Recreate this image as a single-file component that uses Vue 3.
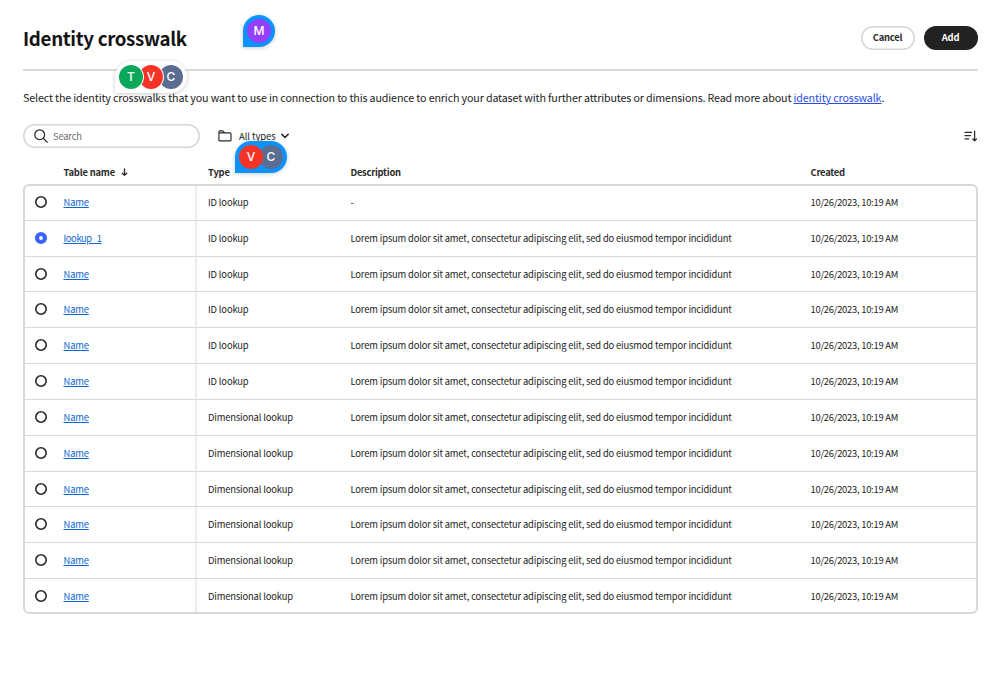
<script setup>
const lorem = 'Lorem ipsum dolor sit amet, consectetur adipiscing elit, sed do eiusmod tempor incididunt'
const rows = Array.from({ length: 12 }, (_, i) => ({
  id: i,
  name: i === 1 ? 'lookup_1' : 'Name',
  selected: i === 1,
  type: i < 6 ? 'ID lookup' : 'Dimensional lookup',
  description: i === 0 ? '-' : lorem,
  created: '10/26/2023, 10:19 AM'
}))
</script>

<template>
  <main class="page">
    <header class="header">
      <h1 class="title">Identity crosswalk</h1>
      <div class="actions">
        <button class="btn cancel">Cancel</button>
        <button class="btn add">Add</button>
      </div>
    </header>

    <p class="intro">Select the identity crosswalks that you want to use in connection to this audience to enrich your dataset with further attributes or dimensions. Read more about <a class="more">identity crosswalk</a>.</p>

    <div class="toolbar">
      <label class="search">
        <svg width="16" height="16" viewBox="0 0 16 16" fill="none" stroke="#292929" stroke-width="1.25" stroke-linecap="round">
          <circle cx="6.7" cy="6.7" r="4.9" />
          <path d="M10.3 10.3L14.2 14.2" />
        </svg>
        <span class="placeholder">Search</span>
      </label>
      <div class="filter">
        <svg width="14" height="12" viewBox="0 0 14 12" fill="none" stroke="#292929" stroke-width="1.15" stroke-linejoin="round">
          <path d="M.9 9.9V1.9Q.9.8 2 .8H4.4Q4.9.8 5.2 1.2L6.5 2.8H12Q13 2.8 13 3.8V9.9Q13 10.9 12 10.9H1.9Q.9 10.9.9 9.9ZM.9 2.8H6.5" />
        </svg>
        <span class="filter-text">All types</span>
        <svg class="chevron" width="8" height="6" viewBox="0 0 8 6" fill="none" stroke="#292929" stroke-width="1.5" stroke-linecap="round" stroke-linejoin="round">
          <path d="M.9 1.4L4 4.5L7.1 1.4" />
        </svg>
      </div>
      <svg class="sort" width="14" height="12" viewBox="0 0 14 12" fill="none" stroke="#292929" stroke-width="1.25" stroke-linecap="round" stroke-linejoin="round">
        <path d="M1 2.4H7.6M1 5.6H6.4M1 8.8H4.8M10.6 1.2V10.6M8.8 9L10.6 10.8L12.4 9" />
      </svg>
    </div>

    <div class="grid head">
      <span></span>
      <span class="name-head">Table name
        <svg width="7" height="9" viewBox="0 0 7 9" fill="none" stroke="#292929" stroke-width="1.3" stroke-linecap="round" stroke-linejoin="round">
          <path d="M3.5 1V7.3M1.3 5.2L3.5 7.4L5.7 5.2" />
        </svg>
      </span>
      <span class="type-head">Type</span>
      <span class="desc-head">Description</span>
      <span class="desc-head">Created</span>
    </div>

    <section class="table">
      <div v-for="row in rows" :key="row.id" class="grid row">
        <svg class="radio" width="14" height="14" viewBox="0 0 14 14" fill="#fff">
          <circle v-if="row.selected" cx="7" cy="7" r="4" stroke="#3b63fb" stroke-width="4.2" />
          <circle v-else cx="7" cy="7" r="5.2" stroke="#292929" stroke-width="1.6" />
        </svg>
        <span class="text"><a class="link" :class="{ lookup: row.selected }">{{ row.name }}</a></span>
        <span class="type"><span class="text">{{ row.type }}</span></span>
        <span class="text">{{ row.description }}</span>
        <span class="text date">{{ row.created }}</span>
      </div>
    </section>

    <div class="pin solid pin-m"><i class="av purple">M</i></div>
    <div class="pin plain pin-tvc"><i class="av green">T</i><i class="av red">V</i><i class="av slate">C</i></div>
    <div class="pin solid pin-vc"><i class="av red">V</i><i class="av slate">C</i></div>
  </main>
</template>

<style>
body { background: #fff; overflow: hidden; }
</style>

<style scoped>
.page {
  position: relative;
  box-sizing: border-box;
  width: 1004px;
  height: 691px;
  padding: 0 26px 0 23px;
  background: #fff;
  color: #222;
  font-family: "Noto Sans CJK SC", "Noto Sans", sans-serif;
  font-size: 9.4px;
  line-height: 16px;
  letter-spacing: -.153px;
  white-space: nowrap;
}
.header {
  display: flex;
  justify-content: space-between;
  box-sizing: border-box;
  height: 71px;
  border-bottom: 2px solid #dadada;
}
.title {
  margin: 24px 0 0;
  font-size: 18.7px;
  font-weight: 700;
  line-height: 28px;
  letter-spacing: -.31px;
  color: #131313;
}
.actions { display: flex; gap: 9px; margin-top: 26px; }
.btn {
  box-sizing: border-box;
  height: 24px;
  padding: 0 1px 2px 0;
  border: 0;
  border-radius: 12px;
  font: 700 9.4px/16px "Noto Sans CJK SC", "Noto Sans", sans-serif;
  letter-spacing: -.2px;
}
.cancel { width: 54px; box-shadow: inset 0 0 0 1.5px #d5d5d5; background: #fff; color: #292929; }
.add { width: 54px; background: #222; color: #fff; }
.intro { margin: 19px 0 0; font-size: 10.7px; line-height: 16px; letter-spacing: -.14px; }
.more { color: #274dea; text-decoration: underline; text-underline-offset: 1px; text-decoration-thickness: 1px; }
.toolbar { display: flex; align-items: center; height: 24px; margin-top: 18px; }
.search {
  display: flex;
  align-items: center;
  box-sizing: border-box;
  width: 177px;
  height: 24px;
  padding-left: 10px;
  box-shadow: inset 0 0 0 1.5px #d5d5d5;
  border-radius: 12px;
}
.placeholder { margin-left: 4px; color: #6d6d6d; letter-spacing: -.2px; }
.filter { display: flex; align-items: center; margin-left: 18px; }
.filter-text { margin-left: 7px; letter-spacing: -.04px; }
.chevron { margin-left: 5.5px; }
.sort { margin-left: auto; }
.grid {
  display: grid;
  grid-template-columns: 40.5px 131.5px 155.5px 460px 1fr;
  align-items: center;
}
.head { height: 24px; margin-top: 12px; font-weight: 700; color: #292929; letter-spacing: -.18px; }
.name-head { display: flex; align-items: center; gap: 6px; }
.type-head { padding-left: 13px; }
.desc-head { letter-spacing: -.26px; }
.table {
  position: relative;
  height: 430px;
  display: grid;
  grid-template-rows: repeat(12, 1fr);
}
.table::after {
  content: "";
  position: absolute;
  inset: 0;
  border: 2px solid #d8d8d8;
  border-radius: 6px;
  pointer-events: none;
}
.row { border-top: 1px solid #d8d8d8; }
.radio { margin-left: 11px; margin-bottom: 1px; }
.text { padding-bottom: .9px; }
.type {
  align-self: stretch;
  display: flex;
  align-items: center;
  padding-left: 11px;
  border-left: 2px solid #ededed;
}
.row:first-child { border-top-color: transparent; }
.date { letter-spacing: -.25px; }
.link { color: #0d66d0; text-decoration: underline; text-underline-offset: 1px; text-decoration-thickness: 1px; }
.lookup { letter-spacing: -.38px; }
.pin {
  position: absolute;
  display: flex;
  box-sizing: border-box;
  height: 32px;
  padding: 4px;
  border-radius: 16px 16px 16px 0;
  box-shadow: 0 1px 4px rgba(0, 0, 0, .2);
}
.solid { background: #0a93ff; }
.plain { background: #fff; }
.pin-m { left: 243px; top: 15px; }
.pin-tvc { left: 115px; top: 61px; }
.pin-vc { left: 235px; top: 141px; }
.av {
  position: relative;
  width: 24px;
  height: 24px;
  border-radius: 50%;
  color: #fff;
  font: normal 500 12px/24px Inter, sans-serif;
  letter-spacing: 0;
  text-align: center;
}
.av + .av { margin-left: -4px; }
.av:nth-child(1) { z-index: 3; }
.av:nth-child(2) { z-index: 2; }
.plain .av:not(:last-child) { box-shadow: 0 0 0 1px #fff; }
.purple { background: #9340fb; }
.green { background: #0aa858; }
.red { background: #f53327; }
.slate { background: #5b6d90; }
</style>
